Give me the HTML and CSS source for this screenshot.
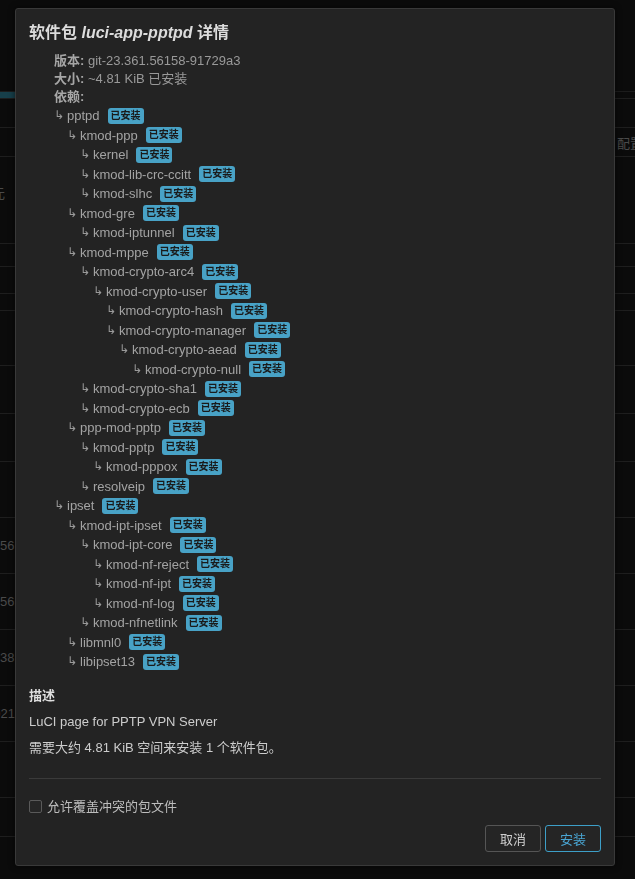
FILE: index.html
```html
<!DOCTYPE html>
<html lang="zh-CN">
<head>
<meta charset="utf-8">
<title>软件包 luci-app-pptpd 详情</title>
<link rel="stylesheet" href="styles.css">
</head>
<body>
<div class="page">
  <div class="bg-head"></div>
  <div class="bg-row r7"><span class="tab-line"></span></div>
  <div class="bg-row r29"></div>
  <div class="bg-row r29"><span class="lt"></span><span class="rt">配置</span></div>
  <div class="bg-row r87"><span class="lt lt-top">元</span></div>
  <div class="bg-row r23"></div>
  <div class="bg-row r27"></div>
  <div class="bg-row r17"></div>
  <div class="bg-row r55"></div>
  <div class="bg-row r48"></div>
  <div class="bg-row r48"></div>
  <div class="bg-row r56"></div>
  <div class="bg-row r56"><span class="lt">56</span></div>
  <div class="bg-row r56"><span class="lt">56</span></div>
  <div class="bg-row r56"><span class="lt">38</span></div>
  <div class="bg-row r56"><span class="lt">021</span></div>
  <div class="bg-row r56"></div>
  <div class="bg-row r39"></div>
</div>

<div class="modal">
  <h4 class="title">软件包 <em>luci-app-pptpd</em> 详情</h4>
  <div class="info">
    <div class="info-line"><b>版本:</b> git-23.361.56158-91729a3</div>
    <div class="info-line"><b>大小:</b> ~4.81 KiB 已安装</div>
    <div class="info-line"><b>依赖:</b></div>
    <ul class="deps">
      <li class="l0"><span class="arr">↳</span>pptpd<span class="badge">已安装</span></li>
      <li class="l1"><span class="arr">↳</span>kmod-ppp<span class="badge">已安装</span></li>
      <li class="l2"><span class="arr">↳</span>kernel<span class="badge">已安装</span></li>
      <li class="l2"><span class="arr">↳</span>kmod-lib-crc-ccitt<span class="badge">已安装</span></li>
      <li class="l2"><span class="arr">↳</span>kmod-slhc<span class="badge">已安装</span></li>
      <li class="l1"><span class="arr">↳</span>kmod-gre<span class="badge">已安装</span></li>
      <li class="l2"><span class="arr">↳</span>kmod-iptunnel<span class="badge">已安装</span></li>
      <li class="l1"><span class="arr">↳</span>kmod-mppe<span class="badge">已安装</span></li>
      <li class="l2"><span class="arr">↳</span>kmod-crypto-arc4<span class="badge">已安装</span></li>
      <li class="l3"><span class="arr">↳</span>kmod-crypto-user<span class="badge">已安装</span></li>
      <li class="l4"><span class="arr">↳</span>kmod-crypto-hash<span class="badge">已安装</span></li>
      <li class="l4"><span class="arr">↳</span>kmod-crypto-manager<span class="badge">已安装</span></li>
      <li class="l5"><span class="arr">↳</span>kmod-crypto-aead<span class="badge">已安装</span></li>
      <li class="l6"><span class="arr">↳</span>kmod-crypto-null<span class="badge">已安装</span></li>
      <li class="l2"><span class="arr">↳</span>kmod-crypto-sha1<span class="badge">已安装</span></li>
      <li class="l2"><span class="arr">↳</span>kmod-crypto-ecb<span class="badge">已安装</span></li>
      <li class="l1"><span class="arr">↳</span>ppp-mod-pptp<span class="badge">已安装</span></li>
      <li class="l2"><span class="arr">↳</span>kmod-pptp<span class="badge">已安装</span></li>
      <li class="l3"><span class="arr">↳</span>kmod-pppox<span class="badge">已安装</span></li>
      <li class="l2"><span class="arr">↳</span>resolveip<span class="badge">已安装</span></li>
      <li class="l0"><span class="arr">↳</span>ipset<span class="badge">已安装</span></li>
      <li class="l1"><span class="arr">↳</span>kmod-ipt-ipset<span class="badge">已安装</span></li>
      <li class="l2"><span class="arr">↳</span>kmod-ipt-core<span class="badge">已安装</span></li>
      <li class="l3"><span class="arr">↳</span>kmod-nf-reject<span class="badge">已安装</span></li>
      <li class="l3"><span class="arr">↳</span>kmod-nf-ipt<span class="badge">已安装</span></li>
      <li class="l3"><span class="arr">↳</span>kmod-nf-log<span class="badge">已安装</span></li>
      <li class="l2"><span class="arr">↳</span>kmod-nfnetlink<span class="badge">已安装</span></li>
      <li class="l1"><span class="arr">↳</span>libmnl0<span class="badge">已安装</span></li>
      <li class="l1"><span class="arr">↳</span>libipset13<span class="badge">已安装</span></li>
    </ul>
  </div>
  <h5 class="desc-title">描述</h5>
  <p class="desc">LuCI page for PPTP VPN Server</p>
  <p class="desc">需要大约 4.81 KiB 空间来安装 1 个软件包。</p>
  <hr class="sep">
  <label class="check"><span class="box"></span>允许覆盖冲突的包文件</label>
  <div class="actions">
    <button class="btn">取消</button>
    <button class="btn primary">安装</button>
  </div>
</div>
</body>
</html>
```

FILE: styles.css
```css
html, body {
  margin: 0;
  padding: 0;
  background: #0b0b0b;
}
body {
  font-family: "Liberation Sans", "Noto Sans CJK SC", sans-serif;
  font-size: 13px;
  color: #999;
  width: 635px;
  height: 879px;
  overflow: hidden;
}

/* background page */
.page {
  display: flex;
  flex-direction: column;
}
.bg-head {
  height: 92px;
  border-bottom: 1px solid #1c1c1c;
  box-sizing: border-box;
}
.bg-row {
  box-sizing: border-box;
  border-bottom: 1px solid #1e1e1e;
  display: flex;
  align-items: center;
  justify-content: space-between;
  color: #4a4a4a;
  font-size: 13px;
  position: relative;
}
.r7 { height: 7px; align-items: stretch; }
.r17 { height: 17px; }
.r23 { height: 23px; }
.r27 { height: 27px; }
.r29 { height: 29px; }
.r39 { height: 39px; }
.r48 { height: 48px; }
.r55 { height: 55px; }
.r56 { height: 56px; }
.r87 { height: 87px; }
.tab-line {
  width: 15px;
  background: #173f4a;
}
.lt {
  width: 15px;
  overflow: hidden;
  direction: rtl;
  white-space: nowrap;
  text-align: left;
}
.lt-top {
  align-self: flex-start;
  margin-top: 26px;
  width: 5px;
}
.rt {
  margin-left: auto;
  width: 18px;
  white-space: nowrap;
  overflow: hidden;
}

/* modal */
.modal {
  position: fixed;
  left: 15px;
  top: 8px;
  width: 600px;
  height: 858px;
  box-sizing: border-box;
  background: #232323;
  border: 1px solid #393939;
  border-radius: 3px;
  padding: 13px;
  display: flex;
  flex-direction: column;
  box-shadow: 0 0 6px rgba(0,0,0,0.6);
}
.title {
  margin: 0 0 8px;
  font-size: 16px;
  line-height: 22px;
  font-weight: bold;
  color: #dcdcdc;
}
.title em {
  font-style: italic;
}
.info {
  margin-left: 25px;
}
.info-line {
  line-height: 18px;
  color: #999;
}
.info-line b {
  color: #a6a6a6;
}
.deps {
  list-style: none;
  margin: 0;
  padding: 0;
}
.deps li {
  height: 19.5px;
  line-height: 19.5px;
  display: flex;
  align-items: center;
  color: #a3a3a3;
  white-space: nowrap;
}
.arr {
  display: inline-block;
  width: 13px;
  font-family: "DejaVu Sans", sans-serif;
  font-size: 12px;
  color: #9a9a9a;
}
.l1 { padding-left: 13px; }
.l2 { padding-left: 26px; }
.l3 { padding-left: 39px; }
.l4 { padding-left: 52px; }
.l5 { padding-left: 65px; }
.l6 { padding-left: 78px; }
.badge {
  display: inline-block;
  margin-left: 8px;
  background: #48a2c6;
  color: #1a1a1a;
  font-size: 10px;
  line-height: 14px;
  padding: 1px 3px;
  border-radius: 3px;
  font-weight: bold;
}
.desc-title {
  margin: 15px 0 0;
  font-size: 13px;
  line-height: 18px;
  font-weight: bold;
  color: #dedede;
}
.desc {
  margin: 8px 0 0;
  line-height: 18px;
  color: #cccccc;
}
.sep {
  margin: 21px 0 0;
  border: 0;
  border-top: 1px solid #3a3a3a;
  height: 0;
}
.check {
  margin-top: 19px;
  display: flex;
  align-items: center;
  line-height: 18px;
  color: #bdbdbd;
}
.box {
  width: 13px;
  height: 13px;
  box-sizing: border-box;
  border: 1px solid #5a5a5a;
  border-radius: 2px;
  margin-right: 5px;
  background: #262626;
}
.actions {
  margin-top: auto;
  display: flex;
  justify-content: flex-end;
  gap: 4px;
}
.btn {
  width: 56px;
  height: 27px;
  box-sizing: border-box;
  background: #252525;
  border: 1px solid #555;
  border-radius: 3px;
  color: #cfcfcf;
  font-family: "Liberation Sans", "Noto Sans CJK SC", sans-serif;
  font-size: 13px;
  padding: 0;
}
.btn.primary {
  border-color: #3d9fc8;
  color: #4aa6d4;
}
```
